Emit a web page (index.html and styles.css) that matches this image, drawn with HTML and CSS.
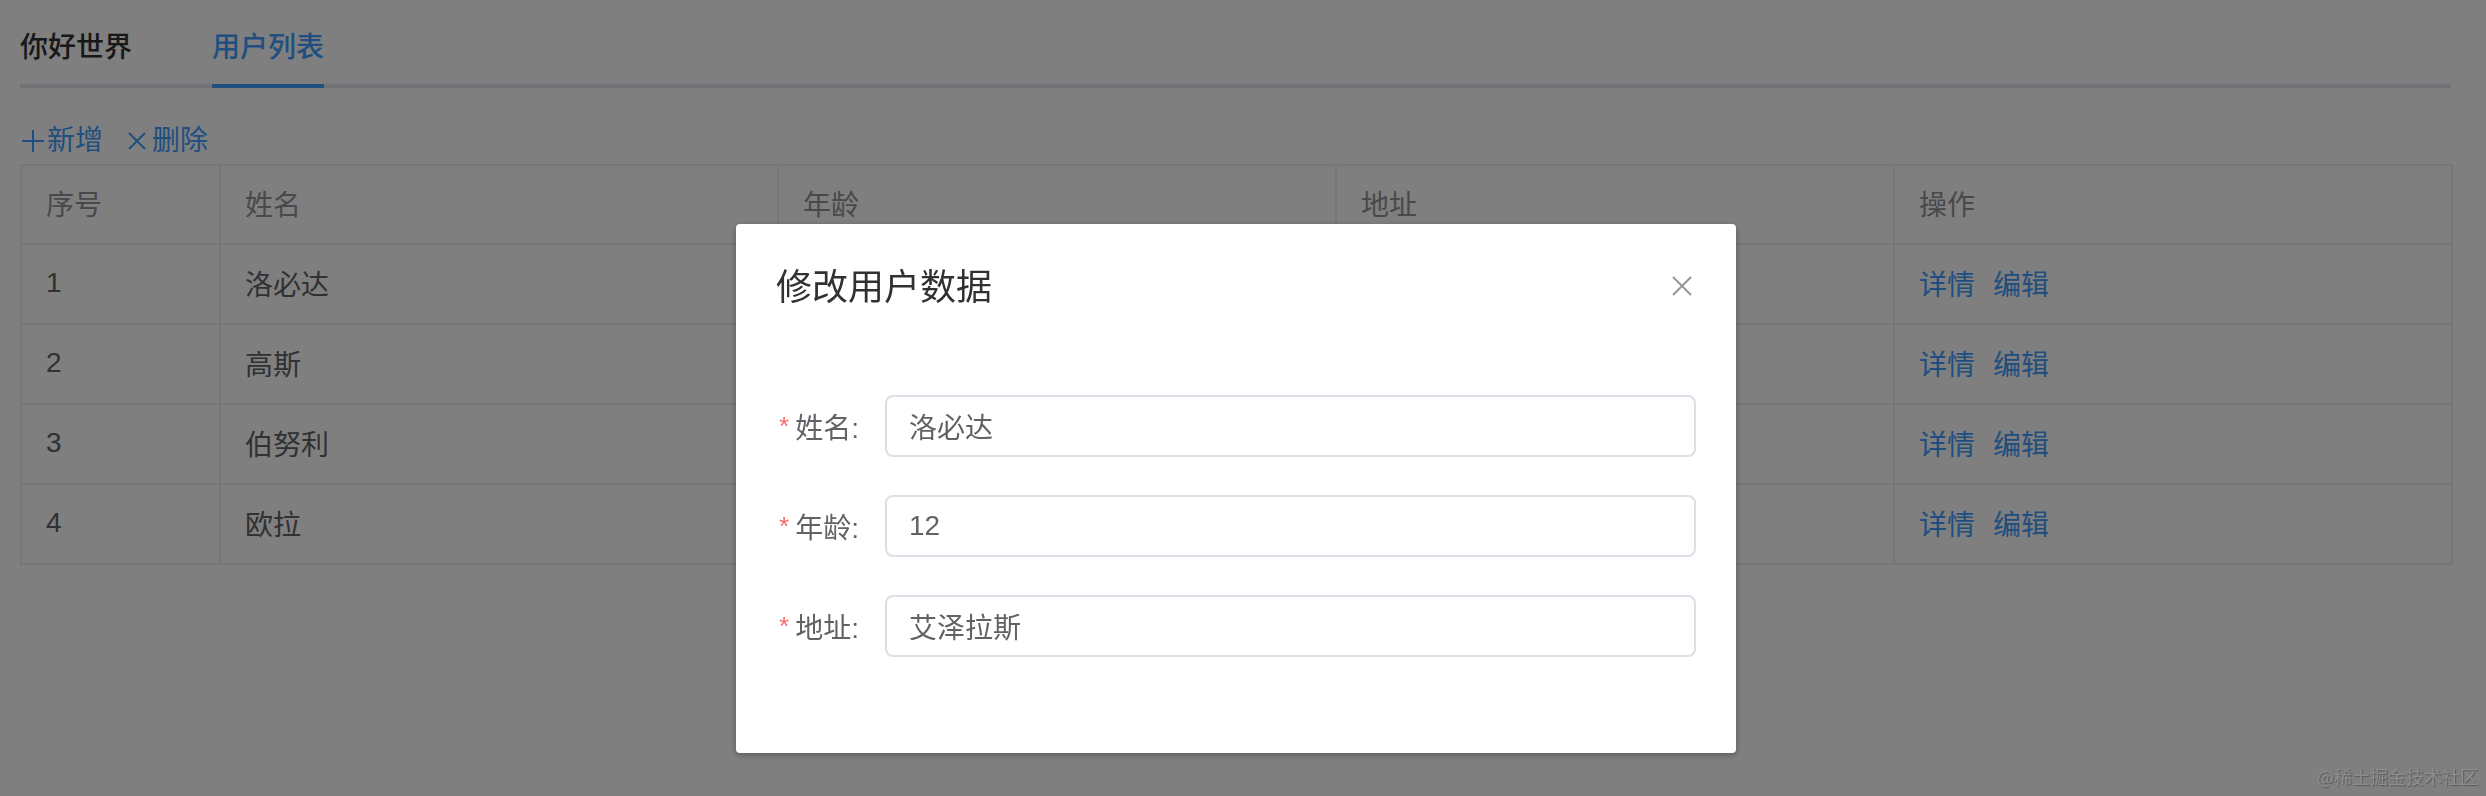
FILE: index.html
```html
<!DOCTYPE html>
<html lang="zh-CN">
<head>
<meta charset="utf-8">
<title>用户列表</title>
<link rel="stylesheet" href="styles.css">
</head>
<body>
<div class="page">
  <div class="tabs">
    <div class="tab first"><span class="tab-label">你好世界</span></div>
    <div class="tab active"><span class="tab-label">用户列表</span></div>
  </div>

  <div class="toolbar">
    <button class="text-btn">
      <svg class="ico-plus" viewBox="0 0 26 26" width="26" height="26"><path d="M13 2V24M2 13H24" stroke="currentColor" stroke-width="2" fill="none"/></svg>
      <span>新增</span>
    </button>
    <button class="text-btn">
      <svg class="ico-x" viewBox="0 0 22 22" width="22" height="22"><path d="M3 3L19 19M19 3L3 19" stroke="currentColor" stroke-width="2" fill="none"/></svg>
      <span>删除</span>
    </button>
  </div>

  <div class="table">
    <div class="cell head">序号</div>
    <div class="cell head">姓名</div>
    <div class="cell head">年龄</div>
    <div class="cell head">地址</div>
    <div class="cell head">操作</div>

    <div class="cell">1</div>
    <div class="cell">洛必达</div>
    <div class="cell"></div>
    <div class="cell"></div>
    <div class="cell ops"><a class="link">详情</a><a class="link">编辑</a></div>

    <div class="cell">2</div>
    <div class="cell">高斯</div>
    <div class="cell"></div>
    <div class="cell"></div>
    <div class="cell ops"><a class="link">详情</a><a class="link">编辑</a></div>

    <div class="cell">3</div>
    <div class="cell">伯努利</div>
    <div class="cell"></div>
    <div class="cell"></div>
    <div class="cell ops"><a class="link">详情</a><a class="link">编辑</a></div>

    <div class="cell">4</div>
    <div class="cell">欧拉</div>
    <div class="cell"></div>
    <div class="cell"></div>
    <div class="cell ops"><a class="link">详情</a><a class="link">编辑</a></div>
  </div>
</div>

<div class="mask"></div>

<div class="dialog-wrap">
  <div class="dialog">
    <div class="dialog-header">
      <span class="dialog-title">修改用户数据</span>
      <svg class="dialog-close" viewBox="0 0 20 20" width="20" height="20"><path d="M1 1L19 19M19 1L1 19" stroke="currentColor" stroke-width="1.8" fill="none"/></svg>
    </div>
    <div class="dialog-body">
      <div class="form-item">
        <label class="form-label"><span class="req">*</span>姓名:</label>
        <div class="input">洛必达</div>
      </div>
      <div class="form-item">
        <label class="form-label"><span class="req">*</span>年龄:</label>
        <div class="input">12</div>
      </div>
      <div class="form-item">
        <label class="form-label"><span class="req">*</span>地址:</label>
        <div class="input">艾泽拉斯</div>
      </div>
    </div>
  </div>
</div>

<div class="watermark">@稀土掘金技术社区</div>
</body>
</html>
```

FILE: styles.css
```css
html, body {
  margin: 0;
  padding: 0;
  background: #ffffff;
  overflow: hidden;
}

body {
  font-family: "Liberation Sans", "Noto Sans CJK SC", sans-serif;
  color: #606266;
  width: 2486px;
  height: 796px;
}

.page {
  padding: 8px 0 0 20px;
}

/* tabs */
.tabs {
  display: flex;
  width: 2431px;
  height: 80px;
  box-shadow: inset 0 -4px 0 #e4e7ed;
  margin-bottom: 30px;
}

.tab {
  display: flex;
  padding: 0 40px;
  font-size: 28px;
  font-weight: 500;
  color: #303133;
}

.tab.first {
  padding-left: 0;
}

.tab-label {
  display: block;
  height: 80px;
  box-sizing: border-box;
  padding-top: 4px;
  line-height: 72px;
  border-bottom: 4px solid transparent;
}

.tab.active {
  color: #409eff;
}

.tab.active .tab-label {
  border-bottom-color: #409eff;
}

/* toolbar */
.toolbar {
  display: flex;
  align-items: center;
  gap: 20px;
  height: 40px;
  padding-top: 3px;
  margin-bottom: 3px;
}

.text-btn {
  display: flex;
  align-items: center;
  gap: 1px;
  padding: 0;
  border: 0;
  background: none;
  color: #409eff;
  font-family: inherit;
  font-size: 28px;
  line-height: 40px;
}

.ico-plus {
  display: block;
}

.ico-x {
  display: block;
  margin-left: 3px;
  margin-right: 3px;
}

/* table */
.table {
  display: grid;
  grid-template-columns: 199px 558px 558px 558px 558px;
  grid-template-rows: 79px repeat(4, 80px);
  width: max-content;
  border-left: 2px solid #ebeef5;
  border-top: 2px solid #ebeef5;
}

.cell {
  display: flex;
  align-items: center;
  padding-left: 24px;
  padding-bottom: 2px;
  border-right: 2px solid #ebeef5;
  border-bottom: 2px solid #ebeef5;
  font-size: 28px;
  color: #606266;
}

.cell.head {
  color: #909399;
  padding-bottom: 4px;
}

.ops {
  gap: 18px;
}

.link {
  color: #409eff;
  text-decoration: none;
}

/* overlay */
.mask {
  position: fixed;
  inset: 0;
  background: rgba(0, 0, 0, 0.5);
}

.dialog-wrap {
  position: fixed;
  inset: 0;
}

.dialog {
  position: relative;
  margin: 224px 0 0 736px;
  width: 1000px;
  background: #ffffff;
  border-radius: 4px;
  box-shadow: 0 2px 6px rgba(0, 0, 0, 0.3);
}

.dialog-header {
  padding: 40px 40px 20px;
}

.dialog-title {
  display: block;
  font-size: 36px;
  line-height: 48px;
  color: #303133;
}

.dialog-close {
  position: absolute;
  top: 52px;
  right: 44px;
  color: #909399;
}

.dialog-body {
  padding: 63px 40px 58px;
}

.form-item {
  display: flex;
  align-items: center;
  height: 62px;
  margin-bottom: 38px;
}

.form-label {
  display: flex;
  justify-content: flex-end;
  align-items: center;
  width: 109px;
  box-sizing: border-box;
  padding-right: 26px;
  font-size: 28px;
  color: #606266;
  white-space: nowrap;
}

.req {
  color: #f56c6c;
  margin-right: 6px;
  font-size: 26px;
}

.input {
  flex: 1;
  height: 62px;
  box-sizing: border-box;
  border: 2px solid #dcdfe6;
  border-radius: 8px;
  padding: 0 22px;
  display: flex;
  align-items: center;
  font-size: 28px;
  color: #606266;
}

.watermark {
  position: fixed;
  right: 8px;
  bottom: 7px;
  font-size: 18px;
  font-family: "Noto Sans CJK SC", sans-serif;
  color: #8e8e8e;
  text-shadow: 1px 1px 1px #5a5a5a;
}
```
